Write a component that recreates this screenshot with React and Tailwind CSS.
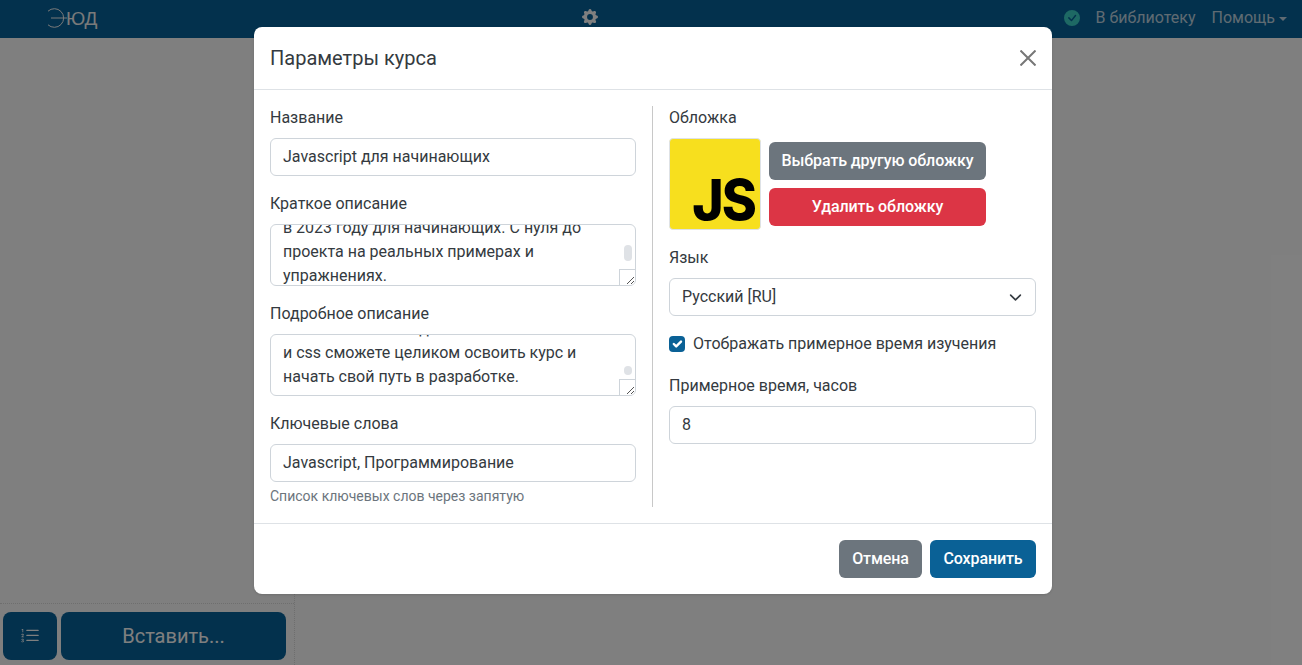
import { BsGearFill, BsCheckCircleFill, BsListOl } from 'react-icons/bs'

function Field({ label, children, className = '' }) {
  return (
    <div className={className}>
      <div className="mb-2 h-6 leading-6">{label}</div>
      {children}
    </div>
  )
}

function TextInput({ value }) {
  return (
    <input
      readOnly
      defaultValue={value}
      className="block h-[38px] w-full rounded-md border border-[#ced4da] bg-white px-3 pb-0.5 text-base text-[#343a40] outline-none"
    />
  )
}

function ScrolledText({ lines, offset, thumb }) {
  return (
    <div className="relative h-[62px] overflow-hidden rounded-md border border-[#ced4da] bg-white px-3">
      <div className={offset}>
        {lines.map((l, i) => (
          <div key={i} className="h-6 whitespace-nowrap leading-6">{l}</div>
        ))}
      </div>
      <div className={`absolute right-[3px] w-2 rounded bg-[#dfe2e6] ${thumb}`} />
      <div className="absolute bottom-0 right-0 h-4 w-4 border-l border-t border-[#ced4da] bg-white">
        <svg viewBox="0 0 16 16" className="h-4 w-4" stroke="#555" strokeWidth="1" fill="none">
          <path d="M7 14 14 7M11 14 14 11" />
        </svg>
      </div>
    </div>
  )
}

export default function App() {
  return (
    <div className="relative h-[665px] w-full overflow-hidden bg-white font-['Roboto',sans-serif] text-[#343a40]">
      {/* page under the backdrop */}
      <nav className="flex h-[38px] items-center bg-[#06629a] pb-0.5 pl-[47px] pr-[15px]">
        <div className="flex w-[535px] items-center text-[#f4f4f4]">
          <svg viewBox="0 0 20 20" className="h-5 w-5" fill="none" stroke="currentColor" strokeWidth="1">
            <path d="M1 3.2A9.3 9.3 0 1 1 1 16.8M4 10H21" />
          </svg>
          <span className="ml-[-1px] font-['Liberation_Sans',sans-serif] text-[19px] leading-none tracking-[0.2px]">ЮД</span>
        </div>
        <BsGearFill className="mb-0.5 h-4 w-4 text-white" />
        <div className="ml-auto flex items-center text-[rgba(255,255,255,.75)]">
          <BsCheckCircleFill className="h-4 w-4 text-[#3cd2c8]" />
          <span className="ml-4">В библиотеку</span>
          <span className="ml-4">Помощь</span>
          <span className="ml-1 mt-[1px] h-0 w-0 border-x-4 border-t-4 border-x-transparent border-t-[rgba(255,255,255,.75)]" />
        </div>
      </nav>
      <div className="flex h-[627px] w-[295px] flex-col justify-end border-r border-dotted border-[#ddd]">
        <div className="flex gap-1 border-t border-dotted border-[#ddd] pb-[5px] pl-[3px] pr-2 pt-2">
          <button className="flex h-12 w-[54px] items-center justify-center rounded-lg bg-[#06629a] text-white">
            <BsListOl className="h-5 w-5" />
          </button>
          <button className="h-12 flex-1 rounded-lg bg-[#06629a] text-xl text-white">Вставить...</button>
        </div>
      </div>

      <div className="absolute inset-0 bg-black/50" />

      {/* dialog */}
      <div className="absolute inset-0 flex justify-center pl-1 pt-[27px]">
        <div className="h-[567px] w-[798px] rounded-lg bg-white shadow-sm">
          <div className="flex h-[63px] items-center justify-between border-b border-[#dee2e6] px-4">
            <h5 className="text-xl">Параметры курса</h5>
            <svg viewBox="0 0 16 16" className="h-4 w-4" stroke="#777" strokeWidth="2" fill="none">
              <path d="M.5.5l15 15M15.5.5l-15 15" />
            </svg>
          </div>

          <div className="flex px-4 pb-4 pt-4">
            <div className="w-[383px] border-r border-[#c8c8c8] pr-4">
              <Field label="Название"><TextInput value="Javascript для начинающих" /></Field>
              <Field label="Краткое описание" className="mt-4">
                <ScrolledText
                  offset="mt-[-9px]"
                  thumb="top-[20px] h-4"
                  lines={['в 2023 году для начинающих. С нуля до', 'проекта на реальных примерах и', 'упражнениях.']}
                />
              </Field>
              <Field label="Подробное описание" className="mt-4">
                <ScrolledText
                  offset="mt-[-18px]"
                  thumb="top-[31px] h-[9px]"
                  lines={['Если вы знаете код на html', 'и css сможете целиком освоить курс и', 'начать свой путь в разработке.']}
                />
              </Field>
              <Field label="Ключевые слова" className="mt-4">
                <TextInput value="Javascript, Программирование" />
                <div className="mt-1 text-sm leading-[21px] text-[#6c757d]">Список ключевых слов через запятую</div>
              </Field>
            </div>

            <div className="w-[383px] pl-4">
              <Field label="Обложка">
                <div className="flex items-center gap-2">
                  <div className="flex h-[92px] w-[92px] items-end justify-end overflow-hidden rounded border border-[#dee2e6] bg-[#f7df1e] pr-[5px]">
                    <span className="origin-right scale-x-95 font-['Inter',sans-serif] text-[56px] font-extrabold leading-[58px] tracking-[-2px] text-black">JS</span>
                  </div>
                  <div className="flex w-[217px] flex-col gap-2">
                    <button className="h-[38px] rounded-md bg-[#6c757d] font-medium tracking-[-0.1px] text-white">Выбрать другую обложку</button>
                    <button className="h-[38px] rounded-md bg-[#dc3545] font-medium tracking-[-0.1px] text-white">Удалить обложку</button>
                  </div>
                </div>
              </Field>
              <Field label="Язык" className="mt-4">
                <div className="flex h-[38px] items-center justify-between rounded-md border border-[#ced4da] bg-white pl-3 pr-[13px]">
                  <span>Русский [RU]</span>
                  <svg viewBox="0 0 16 16" className="h-[13px] w-[13px]" stroke="#343a40" strokeWidth="2" strokeLinecap="round" strokeLinejoin="round" fill="none">
                    <path d="M2 5l6 6 6-6" />
                  </svg>
                </div>
              </Field>
              <div className="mt-4 flex h-6 items-center">
                <span className="flex h-4 w-4 items-center justify-center rounded bg-[#0a6196]">
                  <svg viewBox="0 0 20 20" className="h-4 w-4" stroke="#fff" strokeWidth="3" strokeLinecap="round" strokeLinejoin="round" fill="none">
                    <path d="M6 10l3 3 6-6" />
                  </svg>
                </span>
                <span className="ml-2">Отображать примерное время изучения</span>
              </div>
              <Field label="Примерное время, часов" className="mt-[18px]"><TextInput value="8" /></Field>
            </div>
          </div>

          <div className="flex h-[71px] items-center justify-end gap-2 border-t border-[#dee2e6] px-4">
            <button className="h-[38px] w-[83px] rounded-md bg-[#6c757d] font-medium tracking-[-0.1px] text-white">Отмена</button>
            <button className="h-[38px] w-[106px] rounded-md bg-[#0a6196] font-medium tracking-[-0.1px] text-white">Сохранить</button>
          </div>
        </div>
      </div>
    </div>
  )
}
